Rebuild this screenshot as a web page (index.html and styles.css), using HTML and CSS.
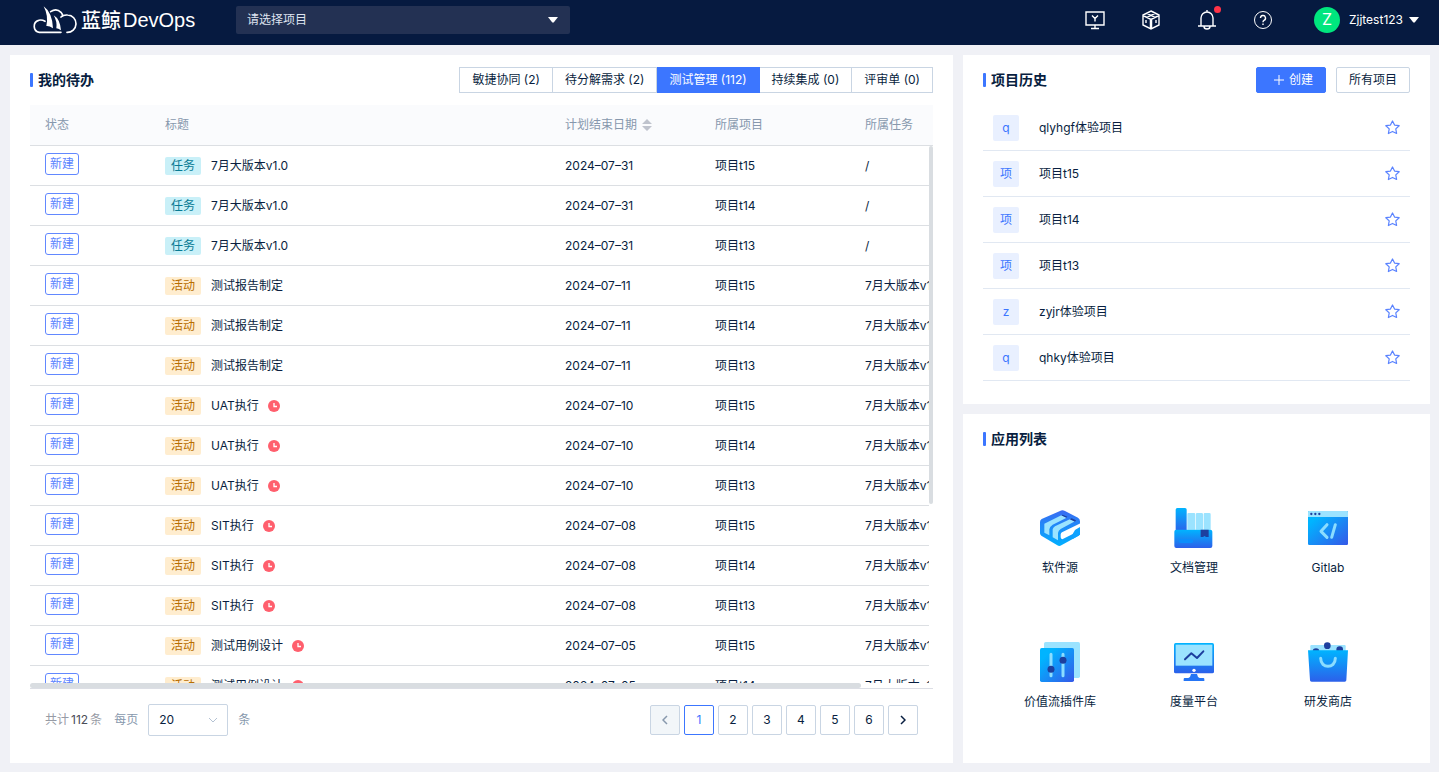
FILE: index.html
```html
<!DOCTYPE html>
<html lang="zh-CN">
<head>
<meta charset="utf-8">
<meta name="viewport" content="width=device-width, initial-scale=1">
<title>蓝鲸DevOps</title>
<link rel="stylesheet" href="styles.css">
</head>
<body>
<svg class="sprite" aria-hidden="true">
  <symbol id="clock" viewBox="0 0 12 12"><circle cx="6" cy="6" r="6" fill="#ff5f6d"/><path d="M6 3v3.5h3" fill="none" stroke="#fff" stroke-width="1.3"/></symbol>
  <symbol id="star" viewBox="0 0 16 16"><path d="M8 1l2.200 4.400 4.900.7-3.600 3.400.9 4.900L8 12.200l-4.400 2.200.9-4.900L.9 6.100l4.900-.7z" fill="none" stroke="currentColor" stroke-width="1.300" stroke-linejoin="round"/></symbol>
</svg>

<header class="topbar">
  <a class="logo" href="#">
    <svg class="logo-mark" viewBox="97 17 138 84" aria-hidden="true">
      <g fill="none" stroke="#fff" stroke-width="5" stroke-linecap="round">
        <path d="M184 96H119A18.5 18.5 0 0 1 117 60Q126 57 136 63"/>
        <path d="M153 34Q170 22 184 36Q189 42 189 47"/>
        <path d="M184 50Q190 43 204 44A26 26 0 0 1 202 96"/>
      </g>
      <path fill="#fff" d="M132 18Q158 37 160 84Q149 76 140 77Q147 47 132 18zM162 45Q181 56 184 90Q175 84 170 84Q173 64 162 45z"/>
    </svg>
    <span class="logo-text"><span class="logo-cn">蓝鲸</span>DevOps</span>
  </a>
  <div class="select-box project-select">
    <select aria-label="选择项目"><option>请选择项目</option></select>
    <svg class="caret" viewBox="0 0 10 6" aria-hidden="true"><path d="M0 0h10L5.700 5.500H4.300z"/></svg>
  </div>
  <nav class="tools" aria-label="工具">
    <button class="tool" type="button" aria-label="工作台"><svg viewBox="0 0 20 20"><path d="M1 2h18v13H1zM10 15v3M6 18.500h8M7 5.500l3 3 3-3M10 8.500v3"/></svg></button>
    <button class="tool" type="button" aria-label="制品库"><svg viewBox="0 0 20 20"><path d="M10 1l8 4v10l-8 4-8-4V5zM2 5.500l8 4 8-4M6 3.300l8 4M14 3.300l-8 4M5 10v3M15 10v3"/><path class="spine" d="M10 9.500V19"/></svg></button>
    <button class="tool" type="button" aria-label="通知"><svg viewBox="0 0 20 20"><path d="M1 16h18M4 16V8a6 6 0 0 1 12 0v8M10 2V0M7 16.500a3 2.500 0 0 0 6 0"/></svg><span class="dot"></span></button>
    <button class="tool" type="button" aria-label="帮助"><svg class="thin" viewBox="0 0 20 20"><circle cx="10" cy="10" r="8.500"/><path class="mark" d="M7.500 8a2.500 2.500 0 1 1 3.500 2.300q-1 .6-1 2M10 13.500v1.500"/></svg></button>
  </nav>
  <button class="user" type="button">
    <span class="avatar">Z</span><span>Zjjtest123</span>
    <svg class="caret" viewBox="0 0 10 6" aria-hidden="true"><path d="M0 0h10L5.700 5.500H4.300z"/></svg>
  </button>
</header>

<main class="board">
  <section class="panel todo">
    <div class="panel-head">
      <h2>我的待办</h2>
      <div class="tabs">
        <button type="button">敏捷协同 (2)</button>
        <button type="button">待分解需求 (2)</button>
        <button type="button" class="active">测试管理 (112)</button>
        <button type="button">持续集成 (0)</button>
        <button type="button">评审单 (0)</button>
      </div>
    </div>
    <div class="table-box">
      <table>
        <colgroup><col class="c-state"><col class="c-title"><col class="c-mid"><col class="c-mid"><col></colgroup>
        <thead><tr><th>状态</th><th>标题</th><th><span class="sortable">计划结束日期<svg class="sort" viewBox="0 0 10 12" aria-hidden="true"><path d="M5 0l5 5H0zM5 12l5-5H0z"/></svg></span></th><th>所属项目</th><th>所属任务</th></tr></thead>
        <tbody>
          <tr><td><span class="state">新建</span></td><td><div class="title"><span class="tag task">任务</span>7月大版本v1.0</div></td><td>2024–07–31</td><td>项目t15</td><td>/</td></tr>
          <tr><td><span class="state">新建</span></td><td><div class="title"><span class="tag task">任务</span>7月大版本v1.0</div></td><td>2024–07–31</td><td>项目t14</td><td>/</td></tr>
          <tr><td><span class="state">新建</span></td><td><div class="title"><span class="tag task">任务</span>7月大版本v1.0</div></td><td>2024–07–31</td><td>项目t13</td><td>/</td></tr>
          <tr><td><span class="state">新建</span></td><td><div class="title"><span class="tag act">活动</span>测试报告制定</div></td><td>2024–07–11</td><td>项目t15</td><td>7月大版本v1.0</td></tr>
          <tr><td><span class="state">新建</span></td><td><div class="title"><span class="tag act">活动</span>测试报告制定</div></td><td>2024–07–11</td><td>项目t14</td><td>7月大版本v1.0</td></tr>
          <tr><td><span class="state">新建</span></td><td><div class="title"><span class="tag act">活动</span>测试报告制定</div></td><td>2024–07–11</td><td>项目t13</td><td>7月大版本v1.0</td></tr>
          <tr><td><span class="state">新建</span></td><td><div class="title"><span class="tag act">活动</span>UAT执行<svg class="late"><use href="#clock"/></svg></div></td><td>2024–07–10</td><td>项目t15</td><td>7月大版本v1.0</td></tr>
          <tr><td><span class="state">新建</span></td><td><div class="title"><span class="tag act">活动</span>UAT执行<svg class="late"><use href="#clock"/></svg></div></td><td>2024–07–10</td><td>项目t14</td><td>7月大版本v1.0</td></tr>
          <tr><td><span class="state">新建</span></td><td><div class="title"><span class="tag act">活动</span>UAT执行<svg class="late"><use href="#clock"/></svg></div></td><td>2024–07–10</td><td>项目t13</td><td>7月大版本v1.0</td></tr>
          <tr><td><span class="state">新建</span></td><td><div class="title"><span class="tag act">活动</span>SIT执行<svg class="late"><use href="#clock"/></svg></div></td><td>2024–07–08</td><td>项目t15</td><td>7月大版本v1.0</td></tr>
          <tr><td><span class="state">新建</span></td><td><div class="title"><span class="tag act">活动</span>SIT执行<svg class="late"><use href="#clock"/></svg></div></td><td>2024–07–08</td><td>项目t14</td><td>7月大版本v1.0</td></tr>
          <tr><td><span class="state">新建</span></td><td><div class="title"><span class="tag act">活动</span>SIT执行<svg class="late"><use href="#clock"/></svg></div></td><td>2024–07–08</td><td>项目t13</td><td>7月大版本v1.0</td></tr>
          <tr><td><span class="state">新建</span></td><td><div class="title"><span class="tag act">活动</span>测试用例设计<svg class="late"><use href="#clock"/></svg></div></td><td>2024–07–05</td><td>项目t15</td><td>7月大版本v1.0</td></tr>
          <tr><td><span class="state">新建</span></td><td><div class="title"><span class="tag act">活动</span>测试用例设计<svg class="late"><use href="#clock"/></svg></div></td><td>2024–07–05</td><td>项目t14</td><td>7月大版本v1.0</td></tr>
        </tbody>
      </table>
      <div class="track-y"><div class="thumb"></div></div>
      <div class="track-x"><div class="thumb"></div></div>
    </div>
    <footer class="pager">
      <span class="total"><span>共计</span><b>112</b><span>条</span></span>
      <label for="size">每页</label>
      <div class="select-box size-select">
        <select id="size"><option>20</option></select>
        <svg class="chevron" viewBox="0 0 10 6" aria-hidden="true"><path d="M1 1l4 4 4-4"/></svg>
      </div>
      <span class="unit">条</span>
      <nav class="pages" aria-label="分页">
        <button type="button" disabled aria-label="上一页"><svg viewBox="0 0 6 10"><path d="M5 1L1 5l4 4"/></svg></button>
        <button type="button" class="current">1</button>
        <button type="button">2</button>
        <button type="button">3</button>
        <button type="button">4</button>
        <button type="button">5</button>
        <button type="button">6</button>
        <button type="button" aria-label="下一页"><svg viewBox="0 0 6 10"><path d="M1 1l4 4-4 4"/></svg></button>
      </nav>
    </footer>
  </section>

  <div class="side">
    <section class="panel">
      <div class="panel-head">
        <h2>项目历史</h2>
        <div class="actions">
          <button class="btn primary" type="button"><svg viewBox="0 0 10 10" aria-hidden="true"><path d="M5 0v10M0 5h10"/></svg>创建</button>
          <button class="btn" type="button">所有项目</button>
        </div>
      </div>
      <ul class="history">
        <li><span class="badge">q</span><a href="#">qlyhgf体验项目</a><button type="button" aria-label="收藏"><svg><use href="#star"/></svg></button></li>
        <li><span class="badge">项</span><a href="#">项目t15</a><button type="button" aria-label="收藏"><svg><use href="#star"/></svg></button></li>
        <li><span class="badge">项</span><a href="#">项目t14</a><button type="button" aria-label="收藏"><svg><use href="#star"/></svg></button></li>
        <li><span class="badge">项</span><a href="#">项目t13</a><button type="button" aria-label="收藏"><svg><use href="#star"/></svg></button></li>
        <li><span class="badge">z</span><a href="#">zyjr体验项目</a><button type="button" aria-label="收藏"><svg><use href="#star"/></svg></button></li>
        <li><span class="badge">q</span><a href="#">qhky体验项目</a><button type="button" aria-label="收藏"><svg><use href="#star"/></svg></button></li>
      </ul>
    </section>

    <section class="panel">
      <div class="panel-head"><h2>应用列表</h2></div>
      <div class="apps">
        <a href="#">
          <svg viewBox="0 0 120 120" aria-hidden="true">
            <defs>
              <linearGradient id="g1" x1="0" y1="0" x2="0" y2="1"><stop offset="0" stop-color="#3a6bf2"/><stop offset="1" stop-color="#00b0ff"/></linearGradient>
              <linearGradient id="g2" x1="0" y1="0" x2="0" y2="1"><stop offset="0" stop-color="#00b4ff"/><stop offset="1" stop-color="#2c60ea"/></linearGradient>
              <linearGradient id="g3" x1="0" y1="0" x2="1" y2="1"><stop offset=".2" stop-color="#00b4ff"/><stop offset="1" stop-color="#3558e8"/></linearGradient>
            </defs>
            <path fill="url(#g1)" d="M60 9Q67 4 75 9L114 29Q120 33 120 40V76Q120 80 116 83L64 112Q58 116 52 112L4 83Q0 80 0 76V42Q0 36 5 33z"/>
            <path fill="#9be3ff" d="M13 47L64 22 80 29 38 50Q29 56 28 64V82L13 74zM38 64Q39 59 45 55L91 33 105 40 62 63Q55 67 54 75V97L38 88z"/>
            <path fill="#1d3f9e" d="M64 22l4-2 14 6-3 3zM89 34l6-3 13 6-3 4z"/>
            <path fill="#fff" d="M66 73L121 46V59L107 66 103 76 67 94Q62 93 62 88V79Q63 75 66 73z"/>
            <path fill="#0fa3ff" d="M105 66L120 57V80L98 93V78z"/>
          </svg>
          <span>软件源</span>
        </a>
        <a href="#">
          <svg viewBox="0 0 120 120" aria-hidden="true">
            <rect x="5" y="0" width="33" height="72" rx="5" fill="url(#g2)"/>
            <path fill="#9be3ff" d="M43 15h17q4 0 4 4v46H40V19q0-4 3-4zM68 15h15q4 0 4 4v46H66V19q0-4 2-4zM92 15h14q4 0 4 4v46H89V19q0-4 3-4z"/>
            <rect x="1" y="65" width="114" height="55" rx="6" fill="url(#g2)"/>
            <path fill="#1d3f9e" d="M80 65h24v22H96l-4-3-5 3h-7z"/>
            <rect x="14" y="93" width="44" height="12" rx="6" fill="#0b8dfb"/>
          </svg>
          <span>文档管理</span>
        </a>
        <a href="#">
          <svg viewBox="0 0 120 120" aria-hidden="true">
            <rect y="9" width="120" height="102" rx="4" fill="url(#g3)"/>
            <path fill="#9be3ff" d="M4 9h112q4 0 4 4v14H0V13q0-4 4-4z"/>
            <g fill="#1d3f9e"><circle cx="10" cy="18" r="3.500"/><circle cx="22" cy="18" r="3.500"/><circle cx="34" cy="18" r="3.500"/></g>
            <path fill="none" stroke="#8bddff" stroke-width="9" stroke-linecap="round" stroke-linejoin="round" d="M57 50L39 70 57 88M82 50L71 88"/>
          </svg>
          <span>Gitlab</span>
        </a>
        <a href="#">
          <svg viewBox="0 0 120 120" aria-hidden="true">
            <rect x="12" width="108" height="108" rx="5" fill="#9be3ff"/>
            <rect y="18" width="102" height="102" rx="5" fill="url(#g3)"/>
            <path stroke="#8bddff" stroke-width="9" stroke-linecap="round" d="M33 37v64M69 37v64"/>
            <g fill="#1d3f9e"><circle cx="33" cy="82" r="10.500"/><circle cx="69" cy="55" r="10.500"/></g>
          </svg>
          <span>价值流插件库</span>
        </a>
        <a href="#">
          <svg viewBox="0 0 120 120" aria-hidden="true">
            <rect y="3" width="120" height="91" rx="5" fill="url(#g2)"/>
            <rect x="5" y="8" width="110" height="63" fill="#9be3ff"/>
            <path fill="none" stroke="#1d3f9e" stroke-width="6" stroke-linecap="round" stroke-linejoin="round" d="M33 52L52 34 69 48 88 28"/>
            <circle cx="60" cy="85" r="5" fill="#fff"/>
            <path fill="#2575f5" d="M51 96h18q1 9 8 12h11q3 0 3 4v5H29v-5q0-4 3-4h11q7-3 8-12z"/>
          </svg>
          <span>度量平台</span>
        </a>
        <a href="#">
          <svg viewBox="0 0 120 120" aria-hidden="true">
            <path fill="#9be3ff" d="M10 9h100q3 0 3 4v20H7V13q0-4 3-4z"/>
            <g fill="#1d3f9e"><circle cx="58" cy="11" r="10"/><circle cx="24" cy="29" r="10"/><circle cx="95" cy="23" r="10"/></g>
            <path fill="url(#g2)" d="M0 25h120l-5 90q0 4-5 4H11q-5 0-5-4z"/>
            <path fill="none" stroke="#8bddff" stroke-width="9" stroke-linecap="round" d="M38 49c0 32 44 32 44 0"/>
          </svg>
          <span>研发商店</span>
        </a>
      </div>
    </section>
  </div>
</main>
</body>
</html>
```
FILE: styles.css
```css
* { box-sizing: border-box; }
body {
  margin: 0;
  height: 100vh;
  display: flex;
  flex-direction: column;
  background: #f0f1f6;
  color: #081e40;
  font: 12px/20px Inter, "Noto Sans CJK SC", sans-serif;
}
button, select {
  margin: 0;
  padding: 0;
  border: 0;
  background: none;
  color: inherit;
  font: inherit;
  cursor: pointer;
}
a { color: inherit; text-decoration: none; }
.sprite { display: none; }

/* top bar */
.topbar {
  display: flex;
  flex: none;
  align-items: center;
  height: 45px;
  padding: 0 20px 5px 32px;
  background: #061a40;
  color: #fff;
}
.logo { display: flex; align-items: center; width: 204px; gap: 3px; }
.logo-mark { width: 46px; height: 28px; }
.logo-text { display: flex; align-items: center; gap: 2px; font: 20px/28px "Liberation Sans", sans-serif; }
.logo-cn { font-family: "Noto Sans CJK SC", sans-serif; font-weight: 500; }
.select-box { position: relative; }
.select-box select { width: 100%; height: 100%; appearance: none; }
.select-box svg { position: absolute; top: 50%; right: 12px; transform: translateY(-50%); pointer-events: none; }
.project-select { width: 334px; height: 28px; border-radius: 2px; background: #233153; color: #dfe4f0; }
.project-select select { padding: 0 11px; }
.caret { width: 10px; height: 6px; fill: #fff; }
.tools { display: flex; gap: 36px; margin-left: auto; }
.tool { position: relative; width: 20px; height: 20px; }
.tool svg { display: block; width: 20px; height: 20px; fill: none; stroke: #fff; stroke-width: 1.4; overflow: visible; }
.tool .thin { stroke-width: 1; }
.tool .mark { stroke-width: 1.4; }
.tool .spine { stroke-width: 2.5; }
.dot { position: absolute; top: -4px; right: -4px; width: 7px; height: 7px; border-radius: 50%; background: #ff3347; }
.user { display: flex; align-items: center; gap: 6px; margin-left: 41px; }
.avatar { width: 26px; height: 26px; margin-right: 3px; border-radius: 50%; background: #00e67e; font-size: 16px; line-height: 24px; }

/* page grid */
.board {
  flex: 1;
  display: grid;
  grid-template-columns: 943fr 467fr;
  grid-template-rows: minmax(0, 1fr);
  gap: 10px;
  min-height: 0;
  padding: 10px 9px 9px 10px;
}
.side { display: grid; grid-template-rows: 1fr 1fr; gap: 10px; min-height: 0; }
.panel { min-width: 0; min-height: 0; padding: 12px 20px 0; background: #fff; }
.panel-head { display: flex; align-items: center; justify-content: space-between; height: 26px; margin-bottom: 12px; }
h2 { display: flex; align-items: center; gap: 5px; margin: 0; font-size: 14px; font-weight: 700; line-height: 20px; }
h2::before { content: ""; width: 3px; height: 14px; border-radius: 1px; background: #3c76ff; }

/* to-do table */
.todo { display: flex; flex-direction: column; }
.todo .panel-head { flex: none; }
.tabs { display: flex; }
.tabs button { height: 26px; padding: 0 12px; border: 1px solid #c9d5e3; border-left-width: 0; line-height: 24px; }
.tabs button:first-child { border-left-width: 1px; }
.tabs .active { border-color: #3c76ff; background: #3c76ff; color: #fff; }
.table-box { position: relative; flex: 1; min-height: 0; overflow: hidden; border-bottom: 1px solid #dcdee5; }
table { width: 100%; min-width: 979px; table-layout: fixed; border-collapse: separate; border-spacing: 0; }
.c-state { width: 120px; }
.c-title { width: 400px; }
.c-mid { width: 150px; }
th, td { height: 40px; padding: 0 15px; border-bottom: 1px solid #dcdfe3; text-align: left; white-space: nowrap; }
th { height: 41px; background: #fafbfd; color: #8798ad; font-weight: 400; }
.sortable { display: flex; align-items: center; gap: 5px; }
.sort { width: 10px; height: 12px; fill: #bfc3cd; }
.state { display: block; width: 34px; height: 22px; margin-bottom: 3px; border: 1px solid #6288ff; border-radius: 3px; color: #5a83ff; line-height: 20px; text-align: center; }
.title { display: flex; align-items: center; }
.tag { width: 36px; height: 18px; margin-right: 10px; border-radius: 2px; line-height: 18px; text-align: center; }
.task { background: #c9f0f8; color: #087a94; }
.act { background: #ffedcf; color: #b86e00; }
.late { width: 12px; height: 12px; margin-left: 9px; }
.thumb { border-radius: 4px; background: #d9dde1; }
.track-y { position: absolute; top: 41px; right: 0; bottom: 0; width: 4px; background: #fff; }
.track-y .thumb { height: 66%; }
.track-x { position: absolute; right: 0; bottom: 0; left: 0; height: 5px; background: #fff; }
.track-x .thumb { width: 92%; height: 100%; }

/* pagination */
.pager { display: flex; flex: none; align-items: center; gap: 10px; height: 74px; padding: 0 15px 12px; color: #8798ad; }
.total { display: flex; gap: 2px; margin-right: 2px; color: #979ba5; }
.total b { color: #4a4d57; font-weight: 400; }
.size-select { width: 80px; height: 32px; border: 1px solid #c9d5e3; border-radius: 2px; color: #081e40; }
.size-select select { padding: 0 10px; }
.size-select .chevron { right: 9px; width: 10px; height: 6px; }
.chevron { fill: none; stroke: #b4c2d3; }
.pages { display: flex; gap: 4px; margin-left: auto; color: #081e40; }
.pages button { display: flex; align-items: center; justify-content: center; width: 30px; height: 30px; border: 1px solid #c9d5e3; border-radius: 2px; }
.pages svg { width: 6px; height: 10px; fill: none; stroke: currentColor; stroke-width: 1.5; }
.pages button:disabled { background: #f2f6f9; color: #8798ad; }
.pages .current { border-color: #3c76ff; color: #3c76ff; }

/* project history */
.actions { display: flex; gap: 10px; }
.btn { display: flex; align-items: center; gap: 5px; height: 26px; padding: 0 12px; border: 1px solid #c9d5e3; border-radius: 2px; }
.btn svg { width: 10px; height: 10px; stroke: currentColor; }
.primary { padding: 0 12px 0 17px; border-color: #3c76ff; background: #3c76ff; color: #fff; }
.history { margin: 0; padding: 0; list-style: none; }
.history li { display: flex; align-items: center; height: 46px; padding: 0 10px; border-bottom: 1px solid #e1e8f2; }
.badge { width: 26px; height: 26px; margin-right: 20px; border-radius: 2px; background: #e9f0ff; color: #3c76ff; line-height: 26px; text-align: center; }
.history button { width: 15px; height: 15px; margin-left: auto; color: #5a83ff; }
.history svg { display: block; width: 15px; height: 15px; }

/* applications */
.apps { display: grid; grid-template-columns: repeat(3, 1fr); padding: 10px 15px 0 10px; }
.apps a { display: flex; flex-direction: column; align-items: center; gap: 10px; height: 134px; padding-top: 34px; }
.apps svg { width: 40px; height: 40px; }
```
